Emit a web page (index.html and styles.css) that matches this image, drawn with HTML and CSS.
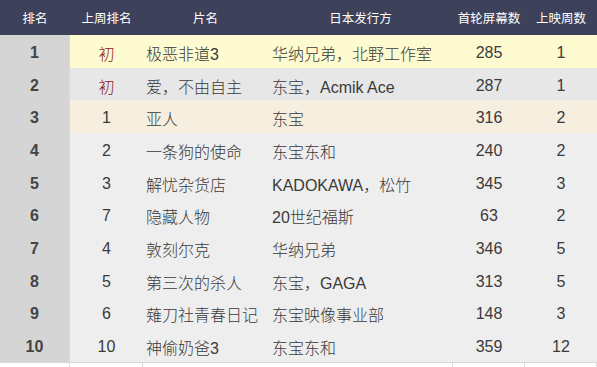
FILE: index.html
```html
<!DOCTYPE html>
<html lang="zh">
<head>
<meta charset="utf-8">
<link rel="stylesheet" href="styles.css">
</head>
<body>
<div class="table">
  <div class="row head">
    <div class="c">排名</div><div class="c">上周排名</div><div class="c">片名</div><div class="c">日本发行方</div><div class="c">首轮屏幕数</div><div class="c">上映周数</div>
  </div>
  <div class="row r-new">
    <div class="c rank">1</div><div class="c new">初</div><div class="c l">极恶非道3</div><div class="c l2">华纳兄弟，北野工作室</div><div class="c">285</div><div class="c">1</div>
  </div>
  <div class="row r-grey">
    <div class="c rank">2</div><div class="c new">初</div><div class="c l">爱，不由自主</div><div class="c l2">东宝，Acmik Ace</div><div class="c">287</div><div class="c">1</div>
  </div>
  <div class="row r-beige">
    <div class="c rank">3</div><div class="c">1</div><div class="c l">亚人</div><div class="c l2">东宝</div><div class="c">316</div><div class="c">2</div>
  </div>
  <div class="row">
    <div class="c rank">4</div><div class="c">2</div><div class="c l">一条狗的使命</div><div class="c l2">东宝东和</div><div class="c">240</div><div class="c">2</div>
  </div>
  <div class="row">
    <div class="c rank">5</div><div class="c">3</div><div class="c l">解忧杂货店</div><div class="c l2">KADOKAWA，松竹</div><div class="c">345</div><div class="c">3</div>
  </div>
  <div class="row">
    <div class="c rank">6</div><div class="c">7</div><div class="c l">隐藏人物</div><div class="c l2">20世纪福斯</div><div class="c">63</div><div class="c">2</div>
  </div>
  <div class="row">
    <div class="c rank">7</div><div class="c">4</div><div class="c l">敦刻尔克</div><div class="c l2">华纳兄弟</div><div class="c">346</div><div class="c">5</div>
  </div>
  <div class="row">
    <div class="c rank">8</div><div class="c">5</div><div class="c l">第三次的杀人</div><div class="c l2">东宝，GAGA</div><div class="c">313</div><div class="c">5</div>
  </div>
  <div class="row">
    <div class="c rank">9</div><div class="c">6</div><div class="c l">薙刀社青春日记</div><div class="c l2">东宝映像事业部</div><div class="c">148</div><div class="c">3</div>
  </div>
  <div class="row">
    <div class="c rank">10</div><div class="c">10</div><div class="c l">神偷奶爸3</div><div class="c l2">东宝东和</div><div class="c">359</div><div class="c">12</div>
  </div>
  <div class="row foot">
    <div class="c"></div><div class="c"></div><div class="c"></div><div class="c"></div><div class="c"></div><div class="c"></div>
  </div>
</div>
</body>
</html>
```
FILE: styles.css
```css
html, body {
  margin: 0;
  padding: 0;
  background: #ffffff;
  overflow: hidden;
}
body {
  font-family: "Liberation Sans", "Noto Sans CJK SC", sans-serif;
  color: #3a3a3a;
}
.table {
  width: 597px;
  display: flex;
  flex-direction: column;
}
.row {
  display: grid;
  grid-template-columns: 70px 73px 125px 185px 72px 72px;
  height: 32.7px;
  background: #eeeeee;
  font-size: 16px;
  font-weight: 300;
}
.c {
  display: flex;
  align-items: center;
  justify-content: center;
  padding-top: 3px;
  white-space: nowrap;
  box-sizing: border-box;
}
.l {
  justify-content: flex-start;
  padding-left: 3px;
}
.l2 {
  justify-content: flex-start;
  padding-left: 4px;
}
.head {
  height: 35px;
  background: #3d4159;
  color: #ffffff;
  font-size: 12.5px;
  font-weight: 400;
}
.head .c {
  padding-top: 0;
}
.rank {
  background: #d5d5d5;
  font-weight: bold;
  color: #444444;
  border-right: 1px solid #dcdcdc;
}
.r-new {
  background: #fffbd0;
}
.r-grey {
  background: #e7e7e7;
}
.r-beige {
  background: #f6efdf;
}
.new {
  color: #8e1c1c;
}
.foot {
  height: 6px;
  background: #ffffff;
  border-top: 1px solid #d8d8d8;
}
.foot .c {
  border-right: 1px solid #dddddd;
  padding: 0;
}
.foot .c:nth-child(3) {
  border-right: none;
}
```
